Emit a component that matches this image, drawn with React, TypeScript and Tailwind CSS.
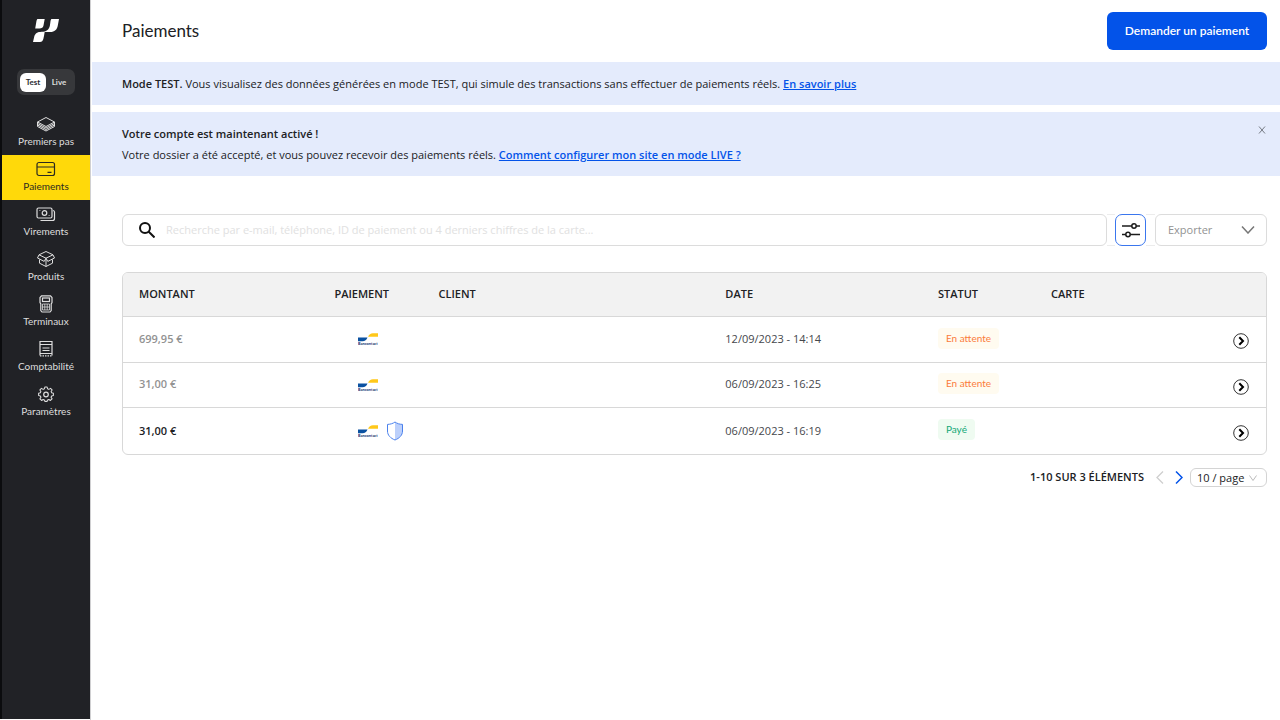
import type { ReactNode } from "react";

const icon = "h-[18px] w-5 fill-none stroke-current stroke-[1.2]";

const nav: { label: string; active?: boolean; art: ReactNode }[] = [
  {
    label: "Premiers pas",
    art: <path d="M10 2.5 18.5 7 10 11.500 1.500 7ZM1.500 7v4.500L10 16l8.500-4.500V7M1.500 8.500 10 13l8.500-4.500M1.500 10 10 14.500l8.500-4.500" strokeWidth="1" />,
  },
  {
    label: "Paiements",
    active: true,
    art: (
      <>
        <rect x="1" y="2.500" width="17.500" height="13" rx="2" />
        <path d="M1 7h17.500M11.500 12.300h4" />
      </>
    ),
  },
  {
    label: "Virements",
    art: (
      <>
        <rect x="1" y="3" width="15" height="10" rx="1.500" />
        <circle cx="8.500" cy="8" r="2.300" />
        <path d="M3.500 5.500h.8M12.700 10.500h.8M17 5.500c1 .2 1.500.7 1.500 1.500v6.500c0 1.200-.8 2-2 2H4.500" />
      </>
    ),
  },
  {
    label: "Produits",
    art: <path d="m10 1.500 7 3.300-7 3.400-7-3.400ZM3 4.800 1.500 8l6.700 3.400L10 8.200l1.800 3.200L18.500 8 17 4.800M3.500 9.500v3.700l6.500 3.300 6.500-3.300V9.500M10 8.500v8" strokeWidth="1" />,
  },
  {
    label: "Terminaux",
    art: (
      <>
        <path d="M5.500.800h9l1.500 1.700v5l-.8 1.500v6.500L14 17H6l-1.200-1.500V9L4 7.500v-5Z" />
        <rect x="6.500" y="3" width="7" height="3.500" />
        <path d="M6.500 9h7v6h-7ZM6.500 12h7M8.800 9v6M11.200 9v6" strokeWidth="0.800" />
      </>
    ),
  },
  {
    label: "Comptabilité",
    art: (
      <>
        <path d="M4 15.500v-14h12v14M4 4.500h12M6.500 8h7M6.500 10.500h7M4 13.500h12" />
        <path d="M4 15.800h12" strokeDasharray="1.500 1" />
      </>
    ),
  },
  {
    label: "Paramètres",
    art: (
      <>
        <path d="M8.700 1.500h2.600l.5 2 1.500.7 1.900-1.100 1.800 1.800L15.900 6.800l.6 1.400 2 .5v2.600l-2 .5-.7 1.500 1.200 1.800-1.900 1.900-1.800-1.200-1.500.7-.5 1.500H8.700l-.5-1.500-1.500-.7L4.900 17 3 15.100l1.200-1.800-.7-1.500-2-.5V8.700l2-.5.6-1.400L3 4.900l1.800-1.800 1.900 1.100 1.500-.7Z" strokeLinejoin="round" transform="translate(1.300 .7) scale(.87)" />
        <circle cx="10" cy="9.500" r="2.300" />
      </>
    ),
  },
];

type Row = { amount: string; date: string; paid?: boolean; height: string };

const rows: Row[] = [
  { amount: "699,95 €", date: "12/09/2023 - 14:14", height: "h-[46px]" },
  { amount: "31,00 €", date: "06/09/2023 - 16:25", height: "h-[45px]" },
  { amount: "31,00 €", date: "06/09/2023 - 16:19", paid: true, height: "h-[47px]" },
];

function Bancontact() {
  return (
    <svg viewBox="0 0 20 14" className="h-[14px] w-5" role="img" aria-label="Bancontact">
      <path d="M0 5.500h9.500C8.500 8 7 9.200 4.500 9.200H0Z" fill="#0a51a1" />
      <path d="M20 1.200v3.500H10C11 2.500 12.500 1.200 15 1.200Z" fill="#ffc81a" />
      <text x="0" y="13.200" fontSize="3.900" fontWeight="700" fill="#0b2a6b" fontFamily="Lato, sans-serif">Bancontact</text>
    </svg>
  );
}

function Shield() {
  return (
    <svg viewBox="0 0 18 20" className="h-5 w-[18px]" role="img" aria-label="Protection">
      <path d="M9 1.500C11 2.700 13.500 3.500 16.500 3.500V10c0 4-3 7-7.500 8.800Z" fill="#bcd0fb" />
      <path d="M9 1c2 1.500 4.500 2.300 7.500 2.400V10c0 4.200-3 7.200-7.500 9C4.500 17.200 1.500 14.200 1.500 10V3.400C4.500 3.300 7 2.500 9 1Z" fill="none" stroke="#4a80ec" />
    </svg>
  );
}

export default function App() {
  return (
    <div className="flex min-h-screen bg-white font-['Open_Sans',sans-serif] text-[11px] text-[#202124]">
      <aside className="mb-px w-[90px] shrink-0 border-l-2 border-l-[#0b0c0e] bg-[#212226] font-['Lato',sans-serif] text-[#dedede]">
        <div className="flex h-[62px] justify-center pt-[19px]">
          <svg viewBox="0 0 26 23" className="h-[23px] w-[26px]" fill="#fff" role="img" aria-label="Accueil">
            <path d="M4.500 0h7.200L10.500 6.500C10 8.700 8.700 9.500 6.500 9.500H2.200L3.300 3C3.600 1.200 4 .3 4.500 0Z" />
            <path d="M18.500 0H26l-1.200 6.500c-.7 4.200-3.300 6.500-7.500 6.500h-5.600c-1 5-1 10-4.700 10H0l1.100-4.700C2 14.200 4.400 13 8.700 12.800c4.300-.1 7.400-1.800 8.200-6.300l.5-3.500C17.600 1.200 18 .3 18.500 0Z" />
          </svg>
        </div>
        <div className="mx-auto mt-[7px] flex h-[26px] w-[58px] items-center rounded-[7px] bg-[#37383b] px-[3px] text-[8px] font-bold">
          <button className="h-[19px] w-[26px] rounded-md bg-white text-[#2a2b30]">Test</button>
          <button className="h-[19px] flex-1">Live</button>
        </div>
        <nav className="mt-[15px] flex flex-col">
          {nav.map((n) => (
            <a
              key={n.label}
              href="#"
              aria-current={n.active ? "page" : undefined}
              className={
                n.active
                  ? "flex h-[45px] flex-col items-center bg-[#ffd90a] pt-[5px] text-[10px] leading-4 text-[#2b2a20]"
                  : "flex h-[45px] flex-col items-center pt-[5px] text-[10px] leading-4"
              }
            >
              <svg viewBox="0 0 20 18" className={icon} aria-hidden="true">{n.art}</svg>
              <span>{n.label}</span>
            </a>
          ))}
        </nav>
      </aside>

      <main className="min-w-0 flex-1 border-l border-l-[#d0d0d2]">
        <header className="flex h-[62px] items-center justify-between pr-[13px] pb-px pl-[31px]">
          <h1 className="font-['Lato',sans-serif] text-[17px] leading-6">Paiements</h1>
          <button className="h-[38px] w-40 rounded-md bg-[#0353e9] font-['Lato',sans-serif] text-xs font-semibold text-white">Demander un paiement</button>
        </header>

        <section className="ml-px h-[43px] bg-[#e4ebfc] pt-[11px] pl-[30px] leading-[21px]">
          <p>
            <strong className="font-semibold">Mode TEST.</strong> Vous visualisez des données générées en mode TEST, qui simule des transactions sans effectuer de paiements réels.{" "}
            <a href="#" className="font-semibold text-[#0353e9] underline">En savoir plus</a>
          </p>
        </section>

        <section className="mt-[7px] ml-px flex h-16 justify-between bg-[#e4ebfc] pt-[11px] pr-[13px] pl-[30px] leading-[21px]">
          <div>
            <p className="font-semibold">Votre compte est maintenant activé !</p>
            <p>
              Votre dossier a été accepté, et vous pouvez recevoir des paiements réels.{" "}
              <a href="#" className="font-semibold text-[#0353e9] underline">Comment configurer mon site en mode LIVE ?</a>
            </p>
          </div>
          <button aria-label="Fermer" className="flex h-3.5 w-2.5 items-center justify-center">
            <svg viewBox="0 0 8 8" className="h-2 w-2 stroke-[#777b85]"><path d="m1 .5 6 7m0-7-6 7" /></svg>
          </button>
        </section>

        <div className="mt-[38px] flex h-8 pr-[13px] pl-[31px]">
          <label className="flex min-w-0 flex-1 items-center rounded-md border border-[#dcdcdc] pl-4">
            <svg viewBox="0 0 16 16" className="h-4 w-4 shrink-0 fill-none stroke-[#111] stroke-2" aria-hidden="true">
              <circle cx="6" cy="6" r="5" /><path d="m9.500 9.500 6 6" />
            </svg>
            <input
              aria-label="Rechercher"
              className="ml-[11px] min-w-0 flex-1 outline-none placeholder:text-[#e1e1e1]"
              placeholder="Recherche par e-mail, téléphone, ID de paiement ou 4 derniers chiffres de la carte..."
            />
          </label>
          <div className="w-2 border-y border-[#ececec]" />
          <button aria-label="Filtres" className="flex w-[31px] items-center justify-center rounded-[7px] border border-[#3a76ee]">
            <svg viewBox="0 0 18 16" className="h-4 w-[18px] fill-white stroke-[#1c1c1c] stroke-[1.500]">
              <path d="M0 4h18M0 12.500h18" /><circle cx="12" cy="4" r="2.200" /><circle cx="6" cy="12.500" r="2.200" />
            </svg>
          </button>
          <div className="w-[9px] border-y border-[#ececec]" />
          <button className="flex w-28 items-center justify-between rounded-md border border-[#dcdcdc] pr-[11px] pl-3 text-[#929292]">
            Exporter
            <svg viewBox="0 0 14 8" className="h-2 w-3.5 fill-none stroke-[#777] stroke-[1.500]"><path d="m1 .5 6 6.500 6-6.500" /></svg>
          </button>
        </div>

        <div className="mt-[26px] mr-[13px] ml-[31px] overflow-hidden rounded-md border border-[#d8d8d8]">
          <table className="w-full table-fixed text-left">
            <colgroup>
              <col className="w-[17.1%]" />
              <col className="w-[9.1%]" />
              <col className="w-[25.1%]" />
              <col className="w-[18.6%]" />
              <col className="w-[9.9%]" />
              <col />
              <col className="w-12" />
            </colgroup>
            <thead className="bg-[#f2f2f2]">
              <tr className="h-[43px] border-b border-[#d8d8d8]">
                {["MONTANT", "PAIEMENT", "CLIENT", "DATE", "STATUT", "CARTE"].map((h) => (
                  <th key={h} scope="col" className="pl-4 font-semibold">{h}</th>
                ))}
                <td />
              </tr>
            </thead>
            <tbody>
              {rows.map((r) => (
                <tr key={r.date} className={`${r.height} border-b border-[#d8d8d8] last:border-b-0`}>
                  <td className={r.paid ? "pl-4 font-semibold" : "pl-4 font-semibold text-[#929292]"}>{r.amount}</td>
                  <td className="pl-10">
                    <div className="flex items-center gap-2">
                      <Bancontact />
                      {r.paid && <Shield />}
                    </div>
                  </td>
                  <td />
                  <td className="pl-4 text-[#45474c]">{r.date}</td>
                  <td className="pb-0.5 pl-4 font-['Lato',sans-serif]">
                    <span
                      className={
                        r.paid
                          ? "inline-block rounded bg-[#effbf1] px-2 text-[10px] leading-[21px] text-[#12a877]"
                          : "inline-block rounded bg-[#fffbf0] px-2 text-[10px] leading-[21px] text-[#fb7b3c]"
                      }
                    >
                      {r.paid ? "Payé" : "En attente"}
                    </span>
                  </td>
                  <td />
                  <td>
                    <button aria-label="Voir le paiement" className="mt-1 ml-[15px] block h-4 w-4">
                      <svg viewBox="0 0 16 16" className="h-4 w-4 fill-none">
                        <circle cx="8" cy="8" r="7.300" stroke="#333" /><path d="m6.300 4.300 3.700 3.700-3.700 3.700" stroke="#000" strokeWidth="2" />
                      </svg>
                    </button>
                  </td>
                </tr>
              ))}
            </tbody>
          </table>
        </div>

        <div className="mt-[13px] flex h-[19px] items-center justify-end pr-[13px]">
          <span className="font-semibold">1-10 SUR 3 ÉLÉMENTS</span>
          <button aria-label="Page précédente" className="ml-3">
            <svg viewBox="0 0 8 13" className="h-[13px] w-2 fill-none stroke-[#cfcfcf] stroke-[1.300]"><path d="M7 .5 1 6.500l6 6" /></svg>
          </button>
          <button aria-label="Page suivante" className="ml-[11px]">
            <svg viewBox="0 0 8 13" className="h-[13px] w-2 fill-none stroke-[#0353e9] stroke-[1.500]"><path d="m1 .5 6 6-6 6" /></svg>
          </button>
          <div className="relative ml-[7px]">
            <select aria-label="Éléments par page" className="h-[19px] w-[77px] appearance-none rounded-md border border-[#d4d4d4] pl-1.5 leading-4">
              <option>10 / page</option>
            </select>
            <svg viewBox="0 0 8 6" className="pointer-events-none absolute top-[7px] right-2.5 h-1.5 w-2 fill-none stroke-[#bbb]"><path d="m.5.500 3.500 5 3.500-5" /></svg>
          </div>
        </div>
      </main>
    </div>
  );
}
